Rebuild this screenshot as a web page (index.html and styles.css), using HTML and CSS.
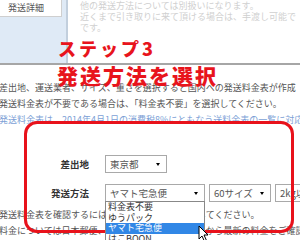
FILE: index.html
```html
<!DOCTYPE html>
<html lang="ja">

<head>
  <meta charset="UTF-8">
  <meta name="viewport" content="width=device-width, initial-scale=1.0">
  <title>発送詳細</title>

  <link rel="stylesheet" href="styles.css">
</head>

<body>
  <div class="page">
    <div class="top">
      <div class="side">
        <div class="tab">発送詳細</div>
      </div>
      <div class="note">
        <p>他の発送方法については別扱いになります。</p>
        <p>近くまで引き取りに来て頂ける場合は、手渡し可能で</p>
        <p>です。</p>
      </div>
    </div>

    <div class="main">
      <p>差出地、運送業者、サイズ、重さを選択すると国内への発送料金表が作成</p>
      <p>発送料金表が不要である場合は、「料金表不要」を選択してください。</p>
      <p class="link">発送料金表は、2014年4月1日の消費税8%にともなう送料金表の一覧に対応しています。</p>

      <div class="form">
        <div class="label">差出地</div>
        <div class="fields">
          <div class="select pref">東京都</div>
        </div>

        <div class="label">発送方法</div>
        <div class="fields">
          <div class="select carrier">ヤマト宅急便
            <ul class="options">
              <li>料金表不要</li>
              <li>ゆうパック</li>
              <li class="on">ヤマト宅急便</li>
              <li>はこBOON</li>
            </ul>
          </div>
          <div class="select size">60サイズ</div>
          <div class="select weight">2kg以内</div>
        </div>
      </div>

      <p class="after">発送料金表を確認するには「料金表」をクリックしてください。</p>
      <p>料金については日本郵便、ヤマト運輸各社のリンクから最新の料金をご確認ください。</p>
    </div>

    <!-- annotation overlay -->
    <div class="frame"></div>
    <div class="step">ステップ3</div>
    <div class="step big">発送方法を選択</div>

    <svg class="cursor" width="12" height="18" viewBox="0 0 12 18">
      <path d="M1 1 L1 14 L4 11 L6.5 16.5 L8.5 15.5 L6 10 L10 10 Z" fill="#fff" stroke="#000" stroke-width="1" stroke-linejoin="round" />
    </svg>
  </div>
</body>

</html>
```

FILE: styles.css
```css
* {
  margin: 0;
  padding: 0;
  box-sizing: border-box;
}

body {
  font-family: "Noto Sans CJK JP", "Noto Sans", sans-serif;
}

li {
  list-style: none;
}

.page {
  position: relative;
  width: 300px;
  height: 240px;
  overflow: hidden;
  background-color: #fff;
}

.top {
  display: flex;
  height: 65px;
  border-bottom: 2px solid #a6a6a6;
}

.side {
  width: 68px;
  background-color: #dfeaf6;
  border-right: 2px solid #c2cfdd;
}

.tab {
  width: 62px;
  height: 17px;
  padding-left: 8px;
  background-color: #fff;
  border-right: 1px solid #cfcfcf;
  border-bottom: 1px solid #cfcfcf;
  font-size: 9px;
  line-height: 16px;
  color: #555;
}

.note {
  padding-left: 12px;
  font-size: 9px;
  line-height: 11px;
  color: #d0d0d0;
  white-space: nowrap;
}

.main {
  margin-left: -1px;
  padding-top: 15px;
  font-size: 9px;
  line-height: 16px;
  color: #555;
}

.main p {
  white-space: nowrap;
}

.main .link {
  color: #7d9fd6;
}

.form {
  display: grid;
  grid-template-columns: 92px 1fr;
  column-gap: 14px;
  row-gap: 11px;
  align-items: center;
  margin-top: 27px;
}

.label {
  padding-right: 2px;
  text-align: right;
  font-size: 9.5px;
  font-weight: bold;
  color: #333;
}

.fields {
  display: flex;
  gap: 4px;
}

.select {
  position: relative;
  flex: none;
  height: 18px;
  padding-left: 4px;
  border: 1px solid #a9a9a9;
  background-color: #fff;
  font-size: 9.5px;
  line-height: 16px;
  color: #555;
  white-space: nowrap;
}

.select::after {
  content: "";
  position: absolute;
  right: 6px;
  top: 7px;
  border-left: 2.5px solid transparent;
  border-right: 2.5px solid transparent;
  border-top: 3px solid #000;
}

.pref {
  width: 62px;
}

.carrier {
  width: 100px;
}

.size {
  width: 62px;
}

.weight {
  width: 44px;
}

.options {
  position: absolute;
  left: -1px;
  top: 16px;
  z-index: 2;
  width: 100px;
  border: 1px solid #888;
  background-color: #fff;
}

.options li {
  height: 10.5px;
  padding-left: 2px;
  font-size: 9px;
  line-height: 10.5px;
  color: #333;
}

.options .on {
  background-color: #3187e6;
  color: #fff;
}

.main .after {
  margin-top: 5px;
}

.frame {
  position: absolute;
  left: 24px;
  top: 121px;
  z-index: 1;
  width: 270px;
  height: 112px;
  border: 3px solid #e8121b;
  border-radius: 13px;
}

.step {
  position: absolute;
  left: 58px;
  top: 39px;
  z-index: 3;
  font-size: 18px;
  font-weight: 900;
  line-height: 1;
  letter-spacing: 3px;
  color: #e8141c;
  white-space: nowrap;
}

.step.big {
  left: 57px;
  top: 65px;
  font-size: 21px;
  letter-spacing: 2px;
}

.cursor {
  position: absolute;
  left: 198px;
  top: 225px;
  z-index: 4;
}
```
